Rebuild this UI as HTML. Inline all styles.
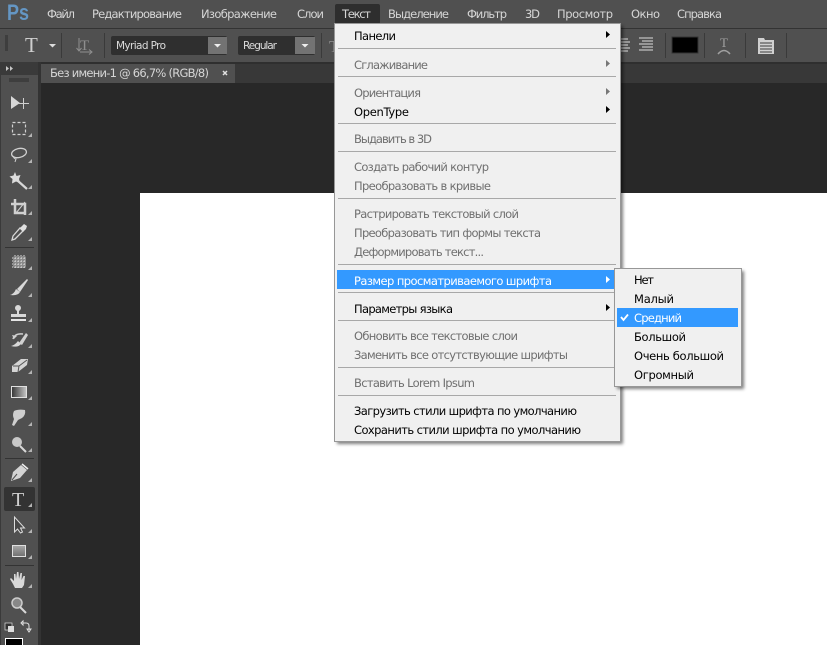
<!DOCTYPE html>
<html><head><meta charset="utf-8"><style>
html,body{margin:0;padding:0;background:#282828;overflow:hidden}
svg{display:block}
text{font-family:"DejaVu Sans","Liberation Sans",sans-serif;font-size:11.5px}
.m{fill:#d6d6d6}
.b{fill:#000}
.g{fill:#6f6f6f}
.w{fill:#fff}
.ic{fill:none;stroke:#d0d0d0}
</style></head><body>
<svg width="827" height="645" viewBox="0 0 827 645" xmlns="http://www.w3.org/2000/svg">
<defs>
<linearGradient id="g1"><stop offset="0" stop-color="#333"/><stop offset="1" stop-color="#c8c8c8"/></linearGradient>
<linearGradient id="g2" x1="0" y1="0" x2="0" y2="1"><stop offset="0" stop-color="#a8a8a8"/><stop offset="1" stop-color="#707070"/></linearGradient>
<filter id="sh" x="-5%" y="-5%" width="110%" height="110%"><feGaussianBlur stdDeviation="1.500"/></filter>
</defs>
<rect width="827" height="645" fill="#282828"/>
<rect x="140" y="193" width="687" height="452" fill="#fff"/>
<!-- top bars -->
<rect width="827" height="28" fill="#505050"/>
<rect y="28" width="827" height="1" fill="#333"/>
<rect y="29" width="827" height="33" fill="#505050"/>
<rect y="62" width="827" height="2" fill="#2f2f2f"/>
<rect y="64" width="827" height="19" fill="#383838"/>
<!-- left panel -->
<rect x="0" y="62" width="39" height="583" fill="#3a3a3a"/>
<rect x="1" y="75" width="37" height="570" fill="#505050"/>
<rect x="38" y="62" width="3" height="583" fill="#333"/>
<path d="M6 66l3 2.500-3 2.500zM10 66l3 2.500-3 2.500" fill="#c8c8c8"/>
<path d="M10 78v4M12 78v4M14 78v4M16 78v4M18 78v4M20 78v4M22 78v4M24 78v4M26 78v4M28 78v4" stroke="#2c2c2c"/>
<!-- tab -->
<rect x="41" y="64" width="194" height="19" fill="#505050"/>
<text x="50" y="77" class="m" textLength="159" lengthAdjust="spacing">Без имени-1 @ 66,7% (RGB/8)</text>
<path d="M223 71l4 4M227 71l-4 4" stroke="#e0e0e0" stroke-width="1.500"/>
<!-- Ps -->
<text x="7" y="20" style="font-family:'Liberation Sans',sans-serif;font-size:22px;font-weight:bold;fill:#6496c4" textLength="22" lengthAdjust="spacingAndGlyphs">Ps</text>
<!-- menu -->
<text x="47" y="18" class="m" textLength="28">Файл</text>
<text x="92" y="18" class="m" textLength="90">Редактирование</text>
<text x="201" y="18" class="m" textLength="76">Изображение</text>
<text x="297" y="18" class="m" textLength="27">Слои</text>
<rect x="335" y="4" width="45" height="20" rx="2" fill="#2e2e2e"/>
<text x="342" y="18" class="m" textLength="29">Текст</text>
<text x="388" y="18" class="m" textLength="61">Выделение</text>
<text x="467" y="18" class="m" textLength="40">Фильтр</text>
<text x="525" y="18" class="m" textLength="15">3D</text>
<text x="557" y="18" class="m" textLength="56">Просмотр</text>
<text x="631" y="18" class="m" textLength="29">Окно</text>
<text x="677" y="18" class="m" textLength="45">Справка</text>
<!-- options bar -->
<path d="M5 36h3M5 38h3M5 40h3M5 42h3M5 44h3M5 46h3M5 48h3M5 50h3" stroke="#2c2c2c"/>
<text x="25" y="52" style="font-family:'Liberation Serif',serif;font-size:21px;fill:#cfcfcf">T</text>
<path d="M49 44h7l-3.500 3.500z" fill="#ddd"/>
<rect x="61" y="33" width="1" height="25" fill="#3a3a3a"/>
<text x="80" y="50" style="font-family:'Liberation Serif',serif;font-size:15px;fill:#8f8f8f">T</text>
<path d="M79 38v13M76.500 48l2.500 3 2.500-3M80 52h12M89 49.500l3 2.500-3 2.500" fill="none" stroke="#8f8f8f"/>
<rect x="104" y="33" width="1" height="25" fill="#3a3a3a"/>
<rect x="111" y="36" width="116" height="19" rx="2" fill="#2f2f2f"/>
<rect x="208" y="37" width="19" height="17" fill="#737373"/>
<path d="M214 44h7l-3.500 3.500z" fill="#eee"/>
<text x="116" y="49" style="fill:#dcdcdc;font-size:10.500px" textLength="50">Myriad Pro</text>
<rect x="238" y="36" width="77" height="19" rx="2" fill="#2f2f2f"/>
<rect x="295" y="37" width="20" height="17" fill="#737373"/>
<path d="M301.500 44h7l-3.500 3.500z" fill="#eee"/>
<text x="243" y="49" style="fill:#dcdcdc;font-size:10.500px" textLength="34">Regular</text>
<rect x="321" y="33" width="1" height="25" fill="#3a3a3a"/>
<text x="329" y="52" style="font-family:'Liberation Serif',serif;font-size:17px;fill:#8f8f8f">T</text>
<path d="M620 39h8M620 42h10M620 45h8M620 48h10M620 51h8" stroke="#ddd" fill="none"/>
<path d="M639 38h14M642 41h11M639 44h14M642 47h11M639 50h14" stroke="#ddd" fill="none"/>
<rect x="665" y="33" width="1" height="25" fill="#3a3a3a"/>
<rect x="672" y="37" width="26" height="16" fill="#000" stroke="#333"/>
<rect x="704" y="33" width="1" height="25" fill="#3a3a3a"/>
<text x="720" y="47" style="font-family:'Liberation Serif',serif;font-size:13px;fill:#a0a0a0">T</text>
<path d="M718 54q6-7 12 0" fill="none" stroke="#a0a0a0" stroke-width="1.500"/>
<rect x="745" y="33" width="1" height="25" fill="#3a3a3a"/>
<path d="M758 38h6l1 2h9v14h-16z" fill="#d0d0d0"/>
<path d="M760 43h12M760 46h12M760 49h12M760 52h12" stroke="#3c3c3c"/>
<rect x="786" y="33" width="1" height="25" fill="#3a3a3a"/>
<!-- tools -->
<g>
<path d="M11 96l9 7-9 6z" fill="#d8d8d8"/>
<path d="M23.500 98v11M18 103.500h11" stroke="#d0d0d0"/>
<rect x="12.500" y="122.500" width="13" height="12" class="ic" stroke-width="1.200" stroke-dasharray="3 2"/>
<ellipse cx="19" cy="153" rx="7.500" ry="4.500" class="ic" transform="rotate(-12 19 153)" stroke-width="1.300"/>
<path d="M13 156q1 3 3 3l-1 3" class="ic"/>
<path d="M15 172l1.500 4 4-1-1.500 4 1 4-4-1.500-4 2 .5-4.500-3-2.500 4-1z" fill="#dcdcdc"/>
<path d="M18 181l9 8" stroke="#d8d8d8" stroke-width="2.200"/>
<path d="M15 199v14h11M11 204h14v11" fill="none" stroke="#d0d0d0" stroke-width="2.500"/>
<path d="M16 213l9-11" stroke="#d0d0d0"/>
<path d="M13 236l7-8 3 3-8 8-3 1z" fill="none" stroke="#d8d8d8" stroke-width="1.300"/>
<path d="M20 228l4-4 3 2-1 3-3 3z" fill="#e0e0e0"/>
<rect x="5" y="247" width="29" height="1" fill="#333"/>
<rect x="13" y="256" width="13" height="12" rx="2" fill="#8a8a8a"/>
<path d="M12 258h15M12 261h15M12 264h15M12 267h15M15 255v14M18 255v14M21 255v14M24 255v14" stroke="#ddd" stroke-dasharray="1 2"/>
<!-- brush -->
<path d="M17 289l10-10 1 1-8 12z" fill="#d8d8d8"/>
<path d="M10 295q4-1 6-6l4 3q-2 4-10 3z" fill="#d8d8d8"/>
<!-- stamp -->
<circle cx="18" cy="308" r="3" fill="#d8d8d8"/>
<path d="M17 310h2v4h7v3H11v-3h6z" fill="#d8d8d8"/>
<rect x="11" y="319" width="15" height="2" fill="#e4e4e4"/>
<!-- history brush -->
<path d="M13 339q2-6 10-5" class="ic" stroke-width="1.500"/>
<path d="M12 335l2 4 3-3z" fill="#d0d0d0"/>
<path d="M19 343l7-10 2 2-6 10z" fill="#d0d0d0"/>
<path d="M11 346q4-1 7-5l3 3q-3 4-10 2z" fill="#d8d8d8"/>
<!-- eraser -->
<path d="M12 366l9-7h7l-1 6-9 7h-6z" fill="#d4d4d4"/>
<path d="M13 366h6l-1 6M19 366l8-6" stroke="#555" fill="none"/>
<!-- gradient -->
<rect x="11.500" y="386.500" width="15" height="11" fill="url(#g1)" stroke="#e0e0e0"/>
<!-- smudge -->
<path d="M14 411q4-2 11-1 1 5-3 8l-4 2-4 6-2-1 2-6q-2-4 0-8z" fill="#cfcfcf"/>
<!-- sponge -->
<circle cx="17" cy="442" r="5" fill="#c8c8c8"/>
<path d="M20 446l6 6" stroke="#d8d8d8" stroke-width="2"/>
<rect x="5" y="458" width="29" height="1" fill="#333"/>
<!-- pen -->
<path d="M11 481l2-9 8-7 6 5-7 8z" fill="#d4d4d4"/>
<path d="M22 464l6 5" stroke="#eee" stroke-width="1.500"/>
<path d="M12 480l5-6" stroke="#505050"/>
<!-- type tool -->
<rect x="4" y="487" width="31" height="24" rx="2" fill="#333"/>
<text x="12" y="506" style="font-family:'Liberation Serif',serif;font-size:20px;fill:#d0d0d0">T</text>
<!-- path select -->
<path d="M14.500 517v15l3-3 3 4 2-1-2-4h4z" fill="#484848" stroke="#ddd"/>
<!-- rect -->
<rect x="12.500" y="545.500" width="13" height="11" fill="url(#g2)" stroke="#e0e0e0"/>
<rect x="5" y="565" width="29" height="1" fill="#333"/>
<!-- hand -->
<path d="M13 584l-3-5 1-1 3 3 0-7h1.500l.5 5 1-7h1.500l.5 7 1.500-6h1.500l-.5 7 2-4h1.500l-1 9-2 3h-7z" fill="#d8d8d8"/>
<!-- zoom -->
<circle cx="17" cy="603" r="5" fill="#888" stroke="#ccc" stroke-width="1.500"/>
<path d="M20 607l6 6" stroke="#d8d8d8" stroke-width="2"/>
<!-- colours -->
<rect x="5" y="623" width="7" height="7" fill="#333" stroke="#ddd" stroke-width=".7"/>
<rect x="8" y="626" width="6" height="6" fill="#ddd"/>
<path d="M23 623h3q3 0 3 3v4M21 623l2-2v4zM27 629l2 3 2-3z" fill="none" stroke="#e0e0e0"/>
<rect x="5.500" y="638.500" width="17" height="12" fill="#000" stroke="#fff"/>
</g>
<!-- small triangles -->
<path fill="#b4b4b4" d="M32 133v4h-4zM32 159v4h-4zM32 185v4h-4zM32 211v4h-4zM32 237v4h-4zM32 266v4h-4zM32 293v4h-4zM32 318v4h-4zM32 344v4h-4zM32 370v4h-4zM32 396v4h-4zM32 422v4h-4zM32 448v4h-4zM32 478v4h-4zM32 503v4h-4zM32 529v4h-4zM32 555v4h-4zM32 584v4h-4z"/>
<!-- main dropdown -->
<rect x="337" y="26" width="286" height="418" fill="#000" opacity=".5" filter="url(#sh)"/>
<rect x="334.500" y="23.500" width="286" height="418" fill="#f0f0f0" stroke="#979797"/>
<g fill="#a8a8a8">
<rect x="338" y="48" width="278" height="1"/>
<rect x="338" y="76" width="278" height="1"/>
<rect x="338" y="123" width="278" height="1"/>
<rect x="338" y="151" width="278" height="1"/>
<rect x="338" y="198" width="278" height="1"/>
<rect x="338" y="264" width="278" height="1"/>
<rect x="338" y="292" width="278" height="1"/>
<rect x="338" y="320" width="278" height="1"/>
<rect x="338" y="367" width="278" height="1"/>
<rect x="338" y="395" width="278" height="1"/>
</g>
<rect x="337" y="270" width="278" height="19" fill="#3399ff"/>
<text x="354" y="40" class="b" textLength="42">Панели</text>
<text x="354" y="69" class="g" textLength="74">Сглаживание</text>
<text x="354" y="97" class="g" textLength="67">Ориентация</text>
<text x="354" y="116" class="b" textLength="55">OpenType</text>
<text x="354" y="143" class="g" textLength="78">Выдавить в 3D</text>
<text x="354" y="171" class="g" textLength="135">Создать рабочий контур</text>
<text x="354" y="190" class="g" textLength="137">Преобразовать в кривые</text>
<text x="354" y="218" class="g" textLength="165">Растрировать текстовый слой</text>
<text x="354" y="237" class="g" textLength="187">Преобразовать тип формы текста</text>
<text x="354" y="256" class="g" textLength="130">Деформировать текст...</text>
<text x="354" y="285" class="w" textLength="198">Размер просматриваемого шрифта</text>
<text x="354" y="313" class="b" textLength="99">Параметры языка</text>
<text x="354" y="340" class="g" textLength="164">Обновить все текстовые слои</text>
<text x="354" y="359" class="g" textLength="214">Заменить все отсутствующие шрифты</text>
<text x="354" y="387" class="g" textLength="121">Вставить Lorem Ipsum</text>
<text x="354" y="415" class="b" textLength="223">Загрузить стили шрифта по умолчанию</text>
<text x="354" y="434" class="b" textLength="227">Сохранить стили шрифта по умолчанию</text>
<path d="M606 31l4 3.500-4 3.500z" fill="#000"/>
<path d="M606 60l4 3.500-4 3.500zM606 88l4 3.500-4 3.500z" fill="#777"/>
<path d="M606 106l4 3.500-4 3.500z" fill="#000"/>
<path d="M606 276l4 3.500-4 3.500z" fill="#fff"/>
<path d="M606 304l4 3.500-4 3.500z" fill="#000"/>
<!-- submenu -->
<rect x="617" y="271" width="127" height="118" fill="#000" opacity=".5" filter="url(#sh)"/>
<rect x="614.500" y="268.500" width="127" height="118" fill="#f0f0f0" stroke="#979797"/>
<rect x="617" y="308" width="121" height="19" fill="#3399ff"/>
<path d="M621 317l2.500 3 4.500-5.500" fill="none" stroke="#fff" stroke-width="1.800"/>
<text x="634" y="284" class="b" textLength="20">Нет</text>
<text x="634" y="303" class="b" textLength="40">Малый</text>
<text x="634" y="322" class="w" textLength="48">Средний</text>
<text x="634" y="341" class="b" textLength="52">Большой</text>
<text x="634" y="360" class="b" textLength="90">Очень большой</text>
<text x="634" y="379" class="b" textLength="60">Огромный</text>
</svg>
</body></html>
